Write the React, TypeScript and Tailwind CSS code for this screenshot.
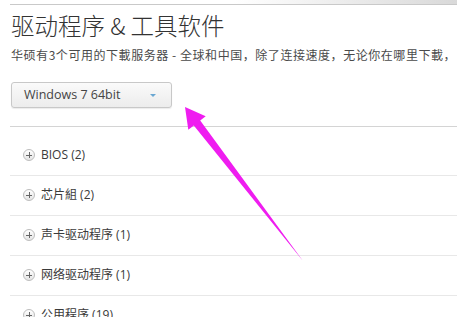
import React from "react";

const rows = ["BIOS (2)", "芯片組 (2)", "声卡驱动程序 (1)", "网络驱动程序 (1)", "公用程序 (19)"];

function PlusIcon() {
  return (
    <span className="relative flex h-[12px] w-[12px] shrink-0 items-center justify-center rounded-full border border-[#bdbdbd] bg-gradient-to-b from-white to-[#e4e4e4]">
      <span className="absolute h-[1px] w-[6px] bg-[#666]" />
      <span className="absolute h-[6px] w-[1px] bg-[#666]" />
    </span>
  );
}

export default function App() {
  return (
    <div
      className="relative h-[317px] w-[457px] overflow-hidden bg-white"
      style={{ fontFamily: '"Open Sans", "Noto Sans CJK SC", sans-serif' }}
    >
      <div className="ml-[10px] h-[5px] border-b border-[#c9c9c9] bg-gradient-to-r from-white via-white to-[#d9d9d9]" />
      <div className="pl-[11px]">
        <h1
          className="mt-[8px] text-[23.5px] font-light leading-[24px] text-[#333]"
          style={{ fontFamily: '"Noto Sans CJK SC", sans-serif' }}
        >
          驱动程序 &amp; 工具软件
        </h1>
        <p
          className="mt-[10px] whitespace-nowrap text-[12px] leading-[16px] tracking-[0.55px] text-[#4a4a4a]"
          style={{ fontFamily: '"Noto Sans CJK SC", sans-serif' }}
        >
          华硕有3个可用的下載服务器 - 全球和中国，除了连接速度，无论你在哪里下載，
        </p>
        <div className="mt-[19px] flex h-[26px] w-[161px] items-center justify-between rounded-[3px] border border-[#c8c8c8] bg-gradient-to-b from-[#fafafa] to-[#ececec] pl-[12px] pr-[15px] shadow-[0_1px_1px_rgba(0,0,0,0.08)]">
          <span className="text-[12.5px] leading-none text-[#444]">Windows 7 64bit</span>
          <span className="h-0 w-0 border-x-[3px] border-t-[3px] border-x-transparent border-t-[#6aa7d2]" />
        </div>
      </div>
      <div className="ml-[10px] mt-[18px] border-t border-[#d4d4d4] pt-[9px]">
        {rows.map((r) => (
          <div
            key={r}
            className="flex h-[40px] items-center gap-[6px] border-b border-[#e8e8e8] pb-[1px] pl-[13px] text-[12px] text-[#3a3a3a]"
          >
            <PlusIcon />
            <span className="leading-none">{r}</span>
          </div>
        ))}
      </div>
      <svg
        className="absolute left-0 top-0"
        width="457"
        height="317"
        viewBox="0 0 457 317"
      >
        <polygon
          points="185,107 205.7,116.3 200.2,120.6 303,261 193.8,125.4 188.3,129.7"
          fill="#ef1df0"
        />
      </svg>
    </div>
  );
}
